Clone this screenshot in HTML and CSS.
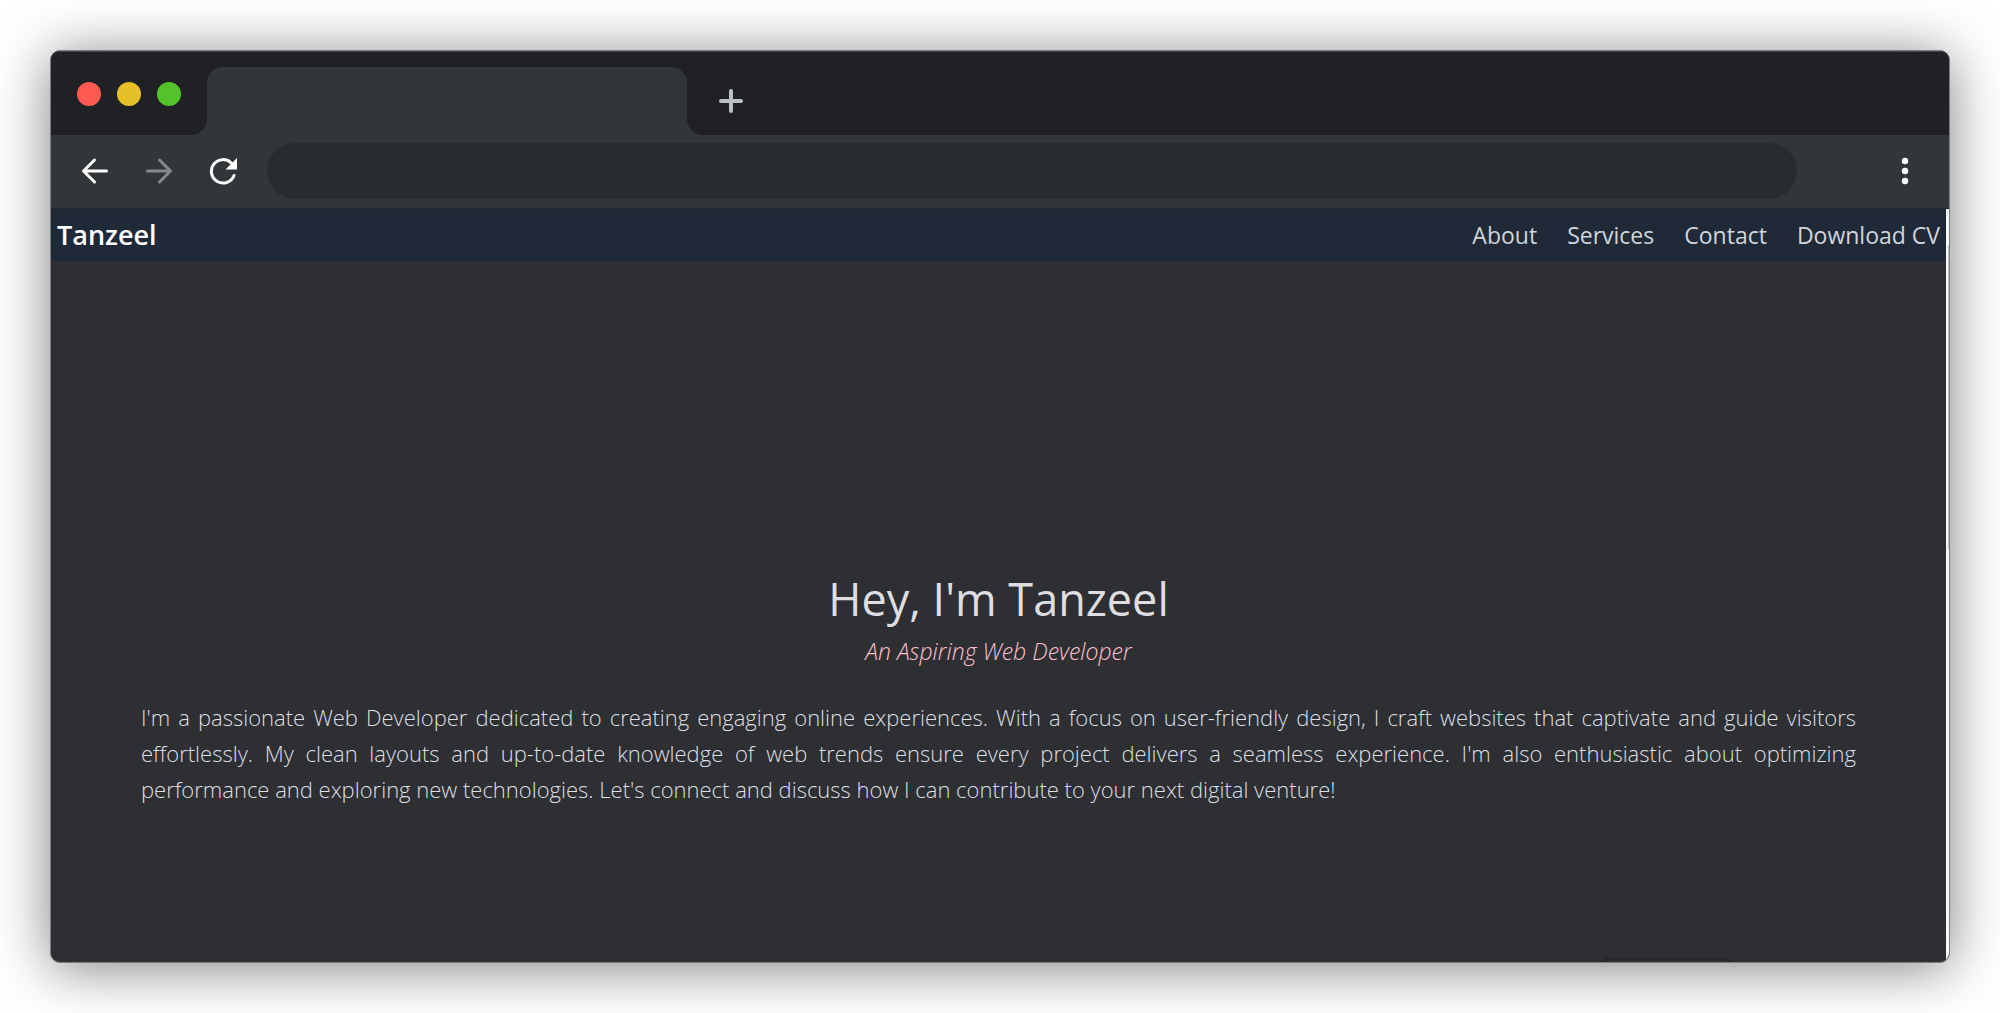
FILE: index.html
```
<!DOCTYPE html>
<html lang="en">
<head>
<meta charset="utf-8">
<meta name="viewport" content="width=device-width, initial-scale=1">
<title>Tanzeel</title>
<link rel="stylesheet" href="styles.css">
</head>
<body>
<div class="window">
  <div class="tab-strip">
    <div class="lights">
      <span class="light light-red"></span>
      <span class="light light-yellow"></span>
      <span class="light light-green"></span>
    </div>
    <div class="tab"></div>
    <div class="strip-rest">
      <button class="icon-button" type="button" aria-label="New tab">
        <svg width="24" height="24" viewBox="0 0 24 24" fill="none" stroke="#bdc1c6" stroke-width="4" stroke-linecap="round"><path d="M12 2v20M2 12h20"/></svg>
      </button>
    </div>
  </div>
  <div class="toolbar">
    <div class="controls">
      <button class="icon-button" type="button" aria-label="Back">
        <svg width="28" height="28" viewBox="0 0 28 28" fill="none" stroke="#fff" stroke-width="3" stroke-linecap="round" stroke-linejoin="round"><path d="M25.500 14H2.500M13.500 3l-11 11 11 11"/></svg>
      </button>
      <button class="icon-button" type="button" aria-label="Forward">
        <svg width="28" height="28" viewBox="0 0 28 28" fill="none" stroke="#86898b" stroke-width="3" stroke-linecap="round" stroke-linejoin="round"><path d="M2.500 14H25.500M14.500 3l11 11-11 11"/></svg>
      </button>
      <button class="icon-button" type="button" aria-label="Reload">
        <svg width="28" height="28" viewBox="0 0 28 28" fill="none"><path d="M25 18.500A11.700 11.700 0 1 1 22.500 6.200" stroke="#fff" stroke-width="3" stroke-linecap="round"/><path d="M28 1v11.500H16.500z" fill="#fff"/></svg>
      </button>
    </div>
    <input class="address" type="text" aria-label="Address">
    <button class="icon-button menu" type="button" aria-label="Menu">
      <svg width="8" height="28" viewBox="0 0 8 28" fill="#fff"><circle cx="4" cy="4" r="3.200"/><circle cx="4" cy="14" r="3.200"/><circle cx="4" cy="24" r="3.200"/></svg>
    </button>
  </div>
  <div class="viewport">
    <div class="page">
      <nav class="navbar">
        <a class="brand" href="#">Tanzeel</a>
        <div class="links">
          <a href="#about">About</a>
          <a href="#services">Services</a>
          <a href="#contact">Contact</a>
          <a href="#cv">Download CV</a>
        </div>
      </nav>
      <main class="hero">
        <h1>Hey, I'm Tanzeel</h1>
        <p class="tagline">An Aspiring Web Developer</p>
        <p class="intro">I'm a passionate Web Developer dedicated to creating engaging online experiences. With a focus on user-friendly design, I craft websites that captivate and guide visitors effortlessly. My clean layouts and up-to-date knowledge of web trends ensure every project delivers a seamless experience. I'm also enthusiastic about optimizing performance and exploring new technologies. Let's connect and discuss how I can contribute to your next digital venture!</p>
      </main>
      <div class="peek"></div>
    </div>
    <div class="scrollbar"><div class="thumb"></div></div>
  </div>
</div>
</body>
</html>
```
FILE: styles.css
```
* { box-sizing: border-box; }

body {
  margin: 0;
  min-height: 100vh;
  padding: 50px;
  display: flex;
  background: #fff;
  font-family: "Open Sans", "Noto Sans", sans-serif;
  font-size: 23px;
  line-height: 36px;
}

.window {
  flex: 1;
  min-width: 0;
  display: flex;
  flex-direction: column;
  overflow: hidden;
  border: 1px solid #7c7d7e;
  border-radius: 10px;
  background: #2e2f33;
  box-shadow: 0 5px 55px rgba(0, 0, 0, 0.5);
}

.tab-strip {
  display: flex;
  height: 84px;
  background: #323639;
  border-top: 1px solid #454749;
}

.lights {
  display: flex;
  gap: 16px;
  width: 156px;
  padding: 30px 0 0 26px;
  background: #202125;
  border-bottom-right-radius: 16px;
}

.light { width: 24px; height: 24px; border-radius: 50%; }
.light-red { background: #ff5a52; }
.light-yellow { background: #e6c029; }
.light-green { background: #54c22b; }

.tab {
  width: 480px;
  background: linear-gradient(#202125, #202125) top / 100% 31px no-repeat;
  padding-top: 15px;
}

.tab::before {
  content: "";
  display: block;
  height: 68px;
  border-radius: 16px 16px 0 0;
  background: #323639;
}

.strip-rest {
  flex: 1;
  padding: 37px 32px 0;
  background: #202125;
  border-bottom-left-radius: 16px;
}

.icon-button {
  display: block;
  padding: 0;
  border: 0;
  background: none;
}

.icon-button svg { display: block; }

.toolbar {
  display: flex;
  align-items: center;
  height: 74px;
  padding: 0 40px 1px 30px;
  background: #323639;
  border-bottom: 1px solid #25282a;
}

.controls { display: flex; gap: 36px; margin-right: 30px; }

.address {
  flex: 1;
  min-width: 0;
  height: 56px;
  padding: 0 28px;
  border: 0;
  border-radius: 28px;
  background: #282c2f;
  color: #fff;
  font: inherit;
}

.menu { margin-left: 104px; }

.viewport { flex: 1; display: flex; }

.page {
  position: relative;
  flex: 1;
  min-width: 0;
  display: flex;
  flex-direction: column;
}

.navbar {
  display: flex;
  align-items: center;
  justify-content: space-between;
  height: 52px;
  padding: 0 6px;
  background: #1f2937;
}

.navbar a { color: #d1d5db; text-decoration: none; }
.navbar .brand { color: #fff; font-size: 27px; font-weight: 600; }
.links { display: flex; gap: 30px; }

.hero {
  flex: 1;
  display: flex;
  flex-direction: column;
  align-items: center;
  justify-content: center;
  padding: 152px 90px 0;
  font-weight: 300;
}

.hero h1 {
  margin: 0;
  color: #dedee0;
  font-size: 45px;
  font-weight: 400;
  line-height: 60px;
}

.tagline { margin: 4px 0 30px; color: #ffc0cb; font-style: italic; }
.intro { margin: 0; color: #dcdfe4; font-size: 22px; text-align: justify; }

/* top edge of the floating control that sits below the fold */
.peek {
  position: absolute;
  right: 215px;
  bottom: 0;
  width: 128px;
  height: 4px;
  border: 2px solid #26272a;
  border-bottom: 0;
  border-radius: 10px 10px 0 0;
}

.scrollbar { width: 3px; padding-top: 36px; background: #f8f8f8; }
.thumb { width: 1px; height: 304px; margin-left: 2px; background: #c1c1c1; }
```
